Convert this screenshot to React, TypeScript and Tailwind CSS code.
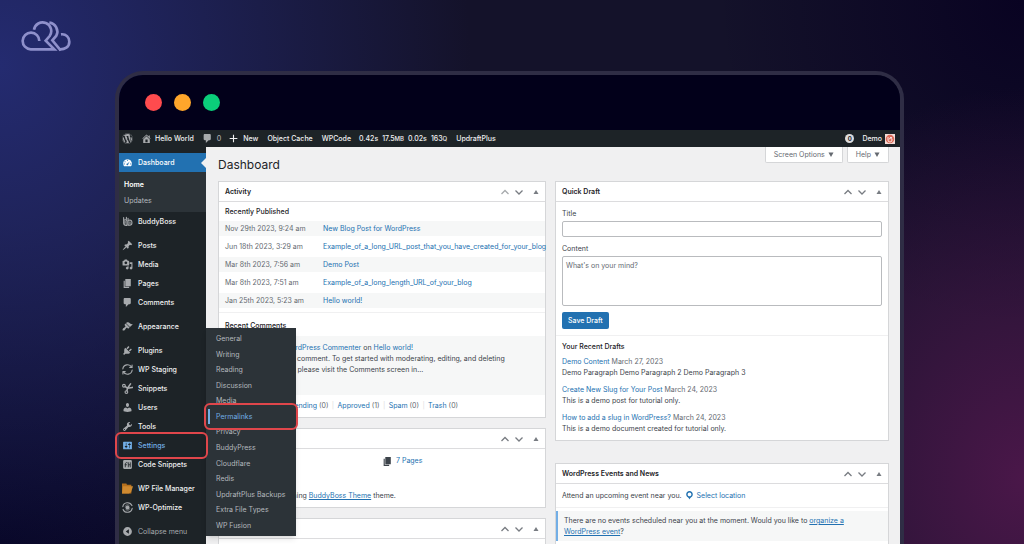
import type { ReactNode } from 'react'
import { FaWordpress } from 'react-icons/fa'

const DASHICONS = {
  dashboard:
    'M3.76 17h12.48A8 8 0 1 0 2 12c0 1.9.66 3.63 1.76 5zM9 6a1 1 0 1 1 2 0 1 1 0 0 1-2 0zM4.5 8.5a1 1 0 1 1 2 0 1 1 0 0 1-2 0zM14 8.4 11.2 13a1.6 1.6 0 1 1-1.1-1zM3 12.5a1 1 0 1 1 2 0 1 1 0 0 1-2 0zM15 12.5a1 1 0 1 1 2 0 1 1 0 0 1-2 0z',
  post: 'M10.44 3.02l1.82-1.82 6.36 6.35-1.83 1.82c-1.05-.68-2.48-.57-3.41.36l-.75.75c-.92.93-1.04 2.35-.35 3.41l-1.83 1.82-2.41-2.41-2.8 2.79c-.42.42-3.38 2.71-3.8 2.29s1.86-3.39 2.28-3.81l2.79-2.79L4.1 9.36l1.83-1.82c1.05.69 2.48.57 3.4-.36l.75-.75c.93-.92 1.05-2.35.36-3.41z',
  media:
    'M13 11V4c0-.55-.45-1-1-1h-1.67L9 1H5L3.67 3H2c-.55 0-1 .45-1 1v7c0 .55.45 1 1 1h10c.55 0 1-.45 1-1zM7 4.5c1.38 0 2.5 1.12 2.5 2.5S8.38 9.5 7 9.5 4.5 8.38 4.5 7 5.62 4.5 7 4.5zM14 6h5v10.5c0 1.38-1.12 2.5-2.5 2.5S14 17.88 14 16.5s1.12-2.5 2.5-2.5c.17 0 .34.02.5.05V9h-3V6zm-4 8.05V13h2v3.5c0 1.38-1.12 2.5-2.5 2.5S7 17.88 7 16.5 8.12 14 9.5 14c.17 0 .34.02.5.05z',
  page: 'M6 15V2h10v13H6zm-1 1h8v2H3V5h2v11z',
  comments:
    'M5 2h9c1.1 0 2 .9 2 2v7c0 1.1-.9 2-2 2h-2l-5 5v-5H5c-1.1 0-2-.9-2-2V4c0-1.1.9-2 2-2z',
  appearance:
    'M14.48 11.06L7.41 3.99l1.5-1.5c.5-.56 2.3-.47 3.51.32 1.21.8 1.43 1.28 2.91 2.1 1.18.64 2.45 1.26 4.45.85zm-.71.71L6.7 4.7 4.93 6.47c-.39.39-.39 1.02 0 1.41l1.06 1.06c.39.39.39 1.03 0 1.42-.6.6-1.43 1.11-2.21 1.69-.35.26-.7.53-1.01.84C1.43 14.23.4 16.08 1.4 17.07c.99 1 2.84-.03 4.18-1.36.31-.31.58-.66.85-1.02.57-.78 1.08-1.61 1.69-2.21.39-.39 1.02-.39 1.41 0l1.06 1.06c.39.39 1.02.39 1.41 0z',
  plugins:
    'M13.11 4.36L9.87 7.6 8 5.73l3.24-3.24c.35-.34 1.05-.2 1.56.32.52.51.66 1.21.31 1.55zm-8 1.77l.91-1.12 9.01 9.01-1.19.84c-.71.71-2.63 1.16-3.82 1.16H6.14L4.9 17.26c-.59.59-1.54.59-2.12 0-.59-.58-.59-1.53 0-2.12l1.24-1.24v-3.88c0-1.13.4-3.19 1.09-3.89zm7.26 3.97l3.24-3.24c.34-.35 1.04-.21 1.55.31.52.51.66 1.21.31 1.55l-3.24 3.25z',
  users:
    'M10 9.25c-2.27 0-2.73-3.44-2.73-3.44C7 4.02 7.82 2 9.97 2c2.16 0 2.98 2.02 2.71 3.81 0 0-.41 3.44-2.68 3.44zm0 2.57L12.72 10c2.39 0 4.52 2.33 4.52 4.53v2.49s-3.65 1.13-7.24 1.13c-3.65 0-7.24-1.13-7.24-1.13v-2.49c0-2.25 1.94-4.48 4.47-4.48z',
  tools:
    'M16.68 9.77c-1.34 1.34-3.3 1.67-4.95.99l-5.41 6.52c-.99.99-2.59.99-3.58 0s-.99-2.59 0-3.57l6.52-5.42c-.68-1.65-.35-3.61.99-4.95 1.28-1.28 3.12-1.62 4.72-1.06l-2.89 2.89 2.82 2.82 2.86-2.87c.53 1.58.18 3.39-1.08 4.65zM3.81 16.21c.4.39 1.04.39 1.43 0 .4-.4.4-1.04 0-1.43-.39-.4-1.03-.4-1.43 0-.39.39-.39 1.03 0 1.43z',
  settings:
    'M18 16V4c0-.55-.45-1-1-1H3c-.55 0-1 .45-1 1v12c0 .55.45 1 1 1h14c.55 0 1-.45 1-1zM8 11h1c.55 0 1 .45 1 1s-.45 1-1 1H8v1.5c0 .28-.22.5-.5.5s-.5-.22-.5-.5V13H6c-.55 0-1-.45-1-1s.45-1 1-1h1V5.5c0-.28.22-.5.5-.5s.5.22.5.5V11zm5-2h-1c-.55 0-1-.45-1-1s.45-1 1-1h1V5.5c0-.28.22-.5.5-.5s.5.22.5.5V7h1c.55 0 1 .45 1 1s-.45 1-1 1h-1v5.5c0 .28-.22.5-.5.5s-.5-.22-.5-.5V9z',
  home: 'M16 8.5l1.53 1.53-1.06 1.06L10 4.6l-6.47 6.49-1.06-1.06L10 2.5l4 4v-2h2v4zm-6-2.46l6 5.99V18H4v-5.97zM12 17v-5H8v5h4z',
  plus: 'M17 9v2h-6v6H9v-6H3V9h6V3h2v6h6z',
  location:
    'M10 2C6.69 2 4 4.69 4 8c0 2.02 1.17 3.71 2.53 4.89.43.37 1.18.96 1.85 1.83.74.97 1.41 2.01 1.62 2.71.21-.7.88-1.74 1.62-2.71.67-.87 1.42-1.46 1.85-1.83C14.83 11.71 16 10.02 16 8c0-3.31-2.69-6-6-6zm0 2.56c1.9 0 3.44 1.54 3.44 3.44S11.9 11.44 10 11.44 6.56 9.9 6.56 8 8.1 4.56 10 4.56z',
  collapse: 'M10 2a8 8 0 1 0 0 16 8 8 0 0 0 0-16zm2.5 12L6.8 10l5.7-4z',
}

function Dashicon({ name }: { name: keyof typeof DASHICONS }) {
  return (
    <svg viewBox="0 0 20 20" className="size-[11px] shrink-0" fill="currentColor" fillRule="evenodd" aria-hidden>
      <path d={DASHICONS[name]} />
    </svg>
  )
}

// Icons that come with the plugins, stroked instead of filled
function PluginIcon({ children }: { children: ReactNode }) {
  return (
    <svg
      viewBox="0 0 20 20"
      className="size-[11px] shrink-0"
      fill="none"
      stroke="currentColor"
      strokeWidth="2"
      strokeLinecap="round"
      strokeLinejoin="round"
      aria-hidden
    >
      {children}
    </svg>
  )
}

const buddyBossIcon = (
  <PluginIcon>
    <path d="M3 3v10a4.500 4.500 0 0 0 4.500 4H9V8.500a3.500 3.500 0 0 0-6 0M8 2.500v3M5.500 9.500v3.500" />
    <path d="M11 4v12.500h3a4 4 0 0 0 4-4V11a4 4 0 0 0-6-3M14.500 10.500v3" />
  </PluginIcon>
)

const stagingIcon = (
  <PluginIcon>
    <path d="M1.500 9a8.600 8.600 0 0 1 16-3.300M18.500 11a8.600 8.600 0 0 1-16 3.300" />
    <path d="M18.300 2v4.200h-4.200M1.700 18v-4.200h4.200" />
  </PluginIcon>
)

const snippetsIcon = (
  <PluginIcon>
    <circle cx="3.500" cy="5" r="2.500" />
    <circle cx="8" cy="16.500" r="2.500" />
    <path d="M6 6.500 10 9.500 19 8M9 14l1-4.500 5.500-8" strokeWidth="2.800" />
  </PluginIcon>
)

const codeSnippetsIcon = (
  <svg viewBox="0 0 20 20" className="size-[11px] shrink-0" aria-hidden>
    <rect x="2" y="2" width="16" height="16" rx="2" fill="currentColor" />
    <path d="M6 15V9a2.500 2.500 0 0 1 4-2M5 10.500h4M11.500 6v9M15 6v9M11.500 10.500H15" stroke="#1d2327" strokeWidth="1.500" fill="none" />
  </svg>
)

const fileManagerIcon = (
  <svg viewBox="0 0 20 20" className="size-[11px] shrink-0" aria-hidden>
    <path d="M0 1h8l1 2h8v16H0z" fill="#b5701d" />
    <path d="M2 6h18l-3 9-4 4H0z" fill="#cf8a30" />
  </svg>
)

const optimizeIcon = (
  <PluginIcon>
    <path d="M1.500 8.500a8.700 8.700 0 0 1 16.500-2M18.500 11.500a8.700 8.700 0 0 1-16.500 2" />
    <circle cx="10" cy="10" r="2.800" fill="currentColor" />
    <path d="M5.500 7.500a5.500 5.500 0 0 1 7.500-2M14.500 12.500a5.500 5.500 0 0 1-7.500 2" strokeWidth="1" />
  </PluginIcon>
)

type MenuItem = { label: string; icon: ReactNode }

// One array per group, groups are separated by a small gap
const MENU: MenuItem[][] = [
  [{ label: 'BuddyBoss', icon: buddyBossIcon }],
  [
    { label: 'Posts', icon: <Dashicon name="post" /> },
    { label: 'Media', icon: <Dashicon name="media" /> },
    { label: 'Pages', icon: <Dashicon name="page" /> },
    { label: 'Comments', icon: <Dashicon name="comments" /> },
  ],
  [{ label: 'Appearance', icon: <Dashicon name="appearance" /> }],
  [
    { label: 'Plugins', icon: <Dashicon name="plugins" /> },
    { label: 'WP Staging', icon: stagingIcon },
    { label: 'Snippets', icon: snippetsIcon },
    { label: 'Users', icon: <Dashicon name="users" /> },
    { label: 'Tools', icon: <Dashicon name="tools" /> },
    { label: 'Settings', icon: <Dashicon name="settings" /> },
    { label: 'Code Snippets', icon: codeSnippetsIcon },
  ],
  [
    { label: 'WP File Manager', icon: fileManagerIcon },
    { label: 'WP-Optimize', icon: optimizeIcon },
  ],
]

const SETTINGS_MENU = [
  'General',
  'Writing',
  'Reading',
  'Discussion',
  'Media',
  'Permalinks',
  'Privacy',
  'BuddyPress',
  'Cloudflare',
  'Redis',
  'UpdraftPlus Backups',
  'Extra File Types',
  'WP Fusion',
]

const POSTS = [
  { date: 'Nov 29th 2023, 9:24 am', title: 'New Blog Post for WordPress' },
  { date: 'Jun 18th 2023, 3:29 am', title: 'Example_of_a_long_URL_post_that_you_have_created_for_your_blog' },
  { date: 'Mar 8th 2023, 7:56 am', title: 'Demo Post' },
  { date: 'Mar 8th 2023, 7:51 am', title: 'Example_of_a_long_length_URL_of_your_blog' },
  { date: 'Jan 25th 2023, 5:23 am', title: 'Hello world!' },
]

const COMMENT_FILTERS = [
  { label: 'All', count: 1 },
  { label: 'Mine', count: 0 },
  { label: 'Pending', count: 0 },
  { label: 'Approved', count: 1 },
  { label: 'Spam', count: 0 },
  { label: 'Trash', count: 0 },
]

const DRAFTS = [
  { title: 'Demo Content', date: 'March 27, 2023', text: 'Demo Paragraph Demo Paragraph 2 Demo Paragraph 3' },
  { title: 'Create New Slug for Your Post', date: 'March 24, 2023', text: 'This is a demo post for tutorial only.' },
  { title: 'How to add a slug in WordPress?', date: 'March 24, 2023', text: 'This is a demo document created for tutorial only.' },
]

function Logo() {
  return (
    <svg viewBox="60 60 156 96" className="h-8 w-[52px]" fill="none" stroke="#8f90cb" strokeWidth="8" aria-label="Logo">
      <path d="M118 123A25 25 0 1 0 92 148H163L137 122 149 108A26 26 0 1 0 102 89" />
      <path d="M148 68A27 27 0 0 1 169 107L157 121 182 151" />
      <path d="M183 103C198 101 208 112 208 125 208 141 194 149 178 148" />
    </svg>
  )
}

function AdminBar() {
  return (
    <header className="flex h-[17px] items-center bg-[#1d2327] pr-[5px] pl-[3px] text-[7px] leading-none font-medium text-[#f0f0f1]">
      <a href="#" aria-label="About WordPress" className="text-[#a7aaad]">
        <FaWordpress className="size-[11px]" />
      </a>
      <a href="#" className="ml-2 flex items-center gap-[3px]">
        <span className="text-[#a7aaad]"><Dashicon name="home" /></span>
        Hello World
      </a>
      <a href="#" className="ml-2 flex items-center gap-1 text-[#a7aaad]">
        <Dashicon name="comments" />0
      </a>
      <a href="#" className="ml-[7px] flex items-center gap-1">
        <Dashicon name="plus" />
        New
      </a>
      <a href="#" className="ml-[9px]">Object Cache</a>
      <a href="#" className="ml-[9px]">WPCode</a>
      <a href="#" className="ml-2 flex items-baseline gap-1">
        <span>0.42s</span>
        <span>17.5<span className="text-[6px]">MB</span></span>
        <span>0.02s</span>
        <span>163<span className="text-[6px]">Q</span></span>
      </a>
      <a href="#" className="ml-[9px]">UpdraftPlus</a>
      <span className="ml-auto flex size-[9px] items-center justify-center rounded-full bg-[#dcdcde] text-[6px] font-bold text-[#1d2327]">
        0
      </span>
      <a href="#" className="ml-2 flex items-center gap-[3px]">
        Demo
        <svg viewBox="0 0 20 20" className="size-[10px]" aria-hidden>
          <rect width="20" height="20" fill="#f3dcd6" />
          <circle cx="10" cy="10" r="8.500" fill="#dd6a58" />
          <path d="M6 6v6a4 4 0 0 0 8 0 3 3 0 0 0-6-1M10 7h4" fill="none" stroke="#fff" strokeWidth="1.600" />
        </svg>
      </a>
    </header>
  )
}

function SettingsFlyout() {
  return (
    <ul className="absolute -top-[108px] left-full z-20 flex h-[208px] w-[90px] flex-col bg-[#2c3338] py-[3px] font-normal text-[#b4b9be] shadow-md">
      {SETTINGS_MENU.map((label) => (
        <li key={label} className="relative flex flex-1 items-center">
          {label === 'Permalinks' ? (
            <>
              <a href="#" className="ml-[2px] flex h-full items-center border-l-2 border-[#72aee6] pl-[6px] text-[#72aee6]">
                {label}
              </a>
              <span className="absolute -inset-x-[2px] -inset-y-[6px] z-10 rounded-md border-2 border-[#e0464b]" />
            </>
          ) : (
            <a href="#" className="pl-[10px]">{label}</a>
          )}
        </li>
      ))}
    </ul>
  )
}

function Sidebar() {
  return (
    <nav className="w-[87px] shrink-0 bg-[#1d2327] pt-[6px] text-[7px] leading-none font-medium text-[#f0f0f1]">
      <a href="#" className="relative flex h-[19px] items-center gap-[5px] bg-[#2271b1] pl-[3px] text-white">
        <Dashicon name="dashboard" />
        Dashboard
        <span className="absolute top-[5px] right-0 border-y-[5px] border-r-[5px] border-y-transparent border-r-[#f0f0f1]" />
      </a>
      <ul className="bg-[#2c3338] py-1">
        <li className="flex h-4 items-center pl-[5px]"><a href="#" className="font-semibold text-white">Home</a></li>
        <li className="flex h-4 items-center pl-[5px]"><a href="#" className="font-normal text-[#b4b9be]">Updates</a></li>
      </ul>
      <div className="flex flex-col gap-[5px]">
        {MENU.map((group) => (
          <ul key={group[0].label}>
            {group.map(({ label, icon }) =>
              label === 'Settings' ? (
                <li key={label} className="relative">
                  <a href="#" className="flex h-[19px] items-center gap-[5px] pl-[3px] text-[#72aee6]">
                    {icon}
                    {label}
                  </a>
                  <SettingsFlyout />
                  <span className="absolute -inset-y-1 -right-[2px] -left-1 z-30 rounded-md border-2 border-[#e0464b]" />
                </li>
              ) : (
                <li key={label}>
                  <a href="#" className="flex h-[19px] items-center gap-[5px] pl-[3px] whitespace-nowrap">
                    <span className="text-[#a7aaad]">{icon}</span>
                    {label}
                  </a>
                </li>
              ),
            )}
          </ul>
        ))}
        <button type="button" className="flex h-[19px] items-center gap-[5px] pl-[3px] font-normal text-[#a7aaad]">
          <Dashicon name="collapse" />
          Collapse menu
        </button>
      </div>
    </nav>
  )
}

function PostBox({ title, firstInColumn = false, children }: { title: string; firstInColumn?: boolean; children?: ReactNode }) {
  return (
    <section className="border border-[#d5d6d8] bg-white">
      <div className="flex h-5 items-center border-b border-[#dcdcde] px-[6px]">
        <h2 className="text-[7px] font-semibold text-[#1d2327]">{title}</h2>
        <div className="ml-auto flex items-center gap-[6px] text-[#787c82]">
          <button type="button" aria-label="Move up" className={firstInColumn ? 'text-[#a7aaad]' : ''}>
            <svg viewBox="0 0 8 8" className="size-2" fill="none" stroke="currentColor" strokeWidth="1.300">
              <path d="M.5 6 4 2.500 7.500 6" />
            </svg>
          </button>
          <button type="button" aria-label="Move down">
            <svg viewBox="0 0 8 8" className="size-2" fill="none" stroke="currentColor" strokeWidth="1.300">
              <path d="M.5 2.500 4 6 7.500 2.500" />
            </svg>
          </button>
          <button type="button" aria-label="Toggle panel" className="ml-1">
            <svg viewBox="0 0 6 8" className="h-2 w-[6px]" fill="currentColor">
              <path d="M3 2 5.500 6h-5z" />
            </svg>
          </button>
        </div>
      </div>
      {children}
    </section>
  )
}

function Activity() {
  return (
    <PostBox title="Activity" firstInColumn>
      <h3 className="flex h-[19px] items-center px-[6px] text-[7px] font-medium text-[#1d2327]">Recently Published</h3>
      <table className="w-full table-fixed border-separate border-spacing-x-0 border-spacing-y-0 text-left">
        <tbody>
          {POSTS.map((post) => (
            <tr key={post.title} className="odd:[&>td]:bg-[#f6f7f7]">
              <td className="h-[18px] w-[98px] border-b-[3px] border-white p-0 pl-[6px] whitespace-nowrap text-[#646970]">{post.date}</td>
              <td className="h-[18px] border-b-[3px] border-white p-0 pl-[6px] whitespace-nowrap">
                <a href="#" className="text-[#2271b1]">{post.title}</a>
              </td>
            </tr>
          ))}
        </tbody>
      </table>
      <h3 className="mt-px flex h-6 items-center border-t border-[#f0f0f1] px-[6px] pt-[2px] text-[7px] font-medium text-[#1d2327]">
        Recent Comments
      </h3>
      <div className="flex h-[59px] gap-[10px] bg-[#f6f7f7] px-[6px] pt-[6px]">
        <span className="size-6 shrink-0 bg-[#dcdcde]" />
        <div className="w-[260px] leading-[11px]">
          <p>
            From <a href="#" className="text-[#2271b1]">A WordPress Commenter</a> on{' '}
            <a href="#" className="text-[#2271b1]">Hello world!</a>
          </p>
          <p>
            Hi, this is a comment. To get started with moderating, editing, and deleting
            comments, please visit the Comments screen in…
          </p>
        </div>
      </div>
      <ul className="flex h-[22px] items-center px-[7px] text-[#646970]">
        {COMMENT_FILTERS.map(({ label, count }, i) => (
          <li key={label} className="flex">
            {i > 0 && <span className="w-[9px] text-center text-[#dcdcde]">|</span>}
            <a href="#" className="text-[#2271b1]">{label}</a>&nbsp;({count})
          </li>
        ))}
      </ul>
    </PostBox>
  )
}

function AtAGlance() {
  return (
    <PostBox title="At a Glance">
      <ul className="grid grid-cols-2 px-[6px] pt-[6px]">
        <li className="flex h-3 items-center gap-[3px]">
          <Dashicon name="post" />
          <a href="#" className="text-[#2271b1]">5 Posts</a>
        </li>
        <li className="flex h-3 items-center gap-[3px]">
          <Dashicon name="page" />
          <a href="#" className="text-[#2271b1]">7 Pages</a>
        </li>
      </ul>
      <p className="px-[6px] pt-6 pb-[6px]">
        WordPress 6.4.2 running <a href="#" className="text-[#2271b1] underline">BuddyBoss Theme</a> theme.
      </p>
    </PostBox>
  )
}

function QuickDraft() {
  return (
    <PostBox title="Quick Draft">
      <form className="flex flex-col items-start px-[6px] pt-[7px]">
        <label htmlFor="draft-title" className="leading-[10px]">Title</label>
        <input
          id="draft-title"
          type="text"
          className="mt-[2px] h-4 w-full rounded-xs border border-[#b9bbbe] bg-white px-1"
        />
        <label htmlFor="draft-content" className="mt-[7px] leading-[10px]">Content</label>
        <textarea
          id="draft-content"
          placeholder="What's on your mind?"
          className="mt-[2px] h-[50px] w-full resize-none rounded-xs border border-[#b9bbbe] bg-white px-[3px] py-1 placeholder:text-[#646970]"
        />
        <button type="button" className="mt-[6px] h-[17px] rounded-xs bg-[#2271b1] px-[6px] font-medium text-white">
          Save Draft
        </button>
      </form>
      <div className="mt-[6px] border-t border-[#f0f0f1] p-[6px]">
        <h3 className="text-[7px] leading-[10px] font-medium text-[#1d2327]">Your Recent Drafts</h3>
        <ul className="mt-1 flex flex-col gap-[6px] leading-[11px]">
          {DRAFTS.map((draft) => (
            <li key={draft.title}>
              <a href="#" className="text-[#2271b1]">{draft.title}</a>{' '}
              <time className="text-[#646970]">{draft.date}</time>
              <p>{draft.text}</p>
            </li>
          ))}
        </ul>
      </div>
    </PostBox>
  )
}

function EventsAndNews() {
  return (
    <PostBox title="WordPress Events and News">
      <div className="flex h-6 items-center border-b border-[#f0f0f1] px-[6px]">
        Attend an upcoming event near you.
        <button type="button" className="ml-[2px] flex items-center gap-[2px] text-[#2271b1]">
          <Dashicon name="location" />
          Select location
        </button>
      </div>
      <p className="mt-[3px] border-l-2 border-[#72aee6] bg-[#f6f7f7] py-1 pr-10 pl-[6px] leading-[11px]">
        There are no events scheduled near you at the moment. Would you like to{' '}
        <a href="#" className="text-[#2271b1] underline">organize a WordPress event</a>?
      </p>
      <div className="h-10" />
    </PostBox>
  )
}

function ScreenTab({ children }: { children: ReactNode }) {
  return (
    <button
      type="button"
      className="flex h-4 items-center gap-[3px] rounded-b-xs border border-t-0 border-[#d5d6d8] bg-white px-2 text-[#646970]"
    >
      {children}
      <svg viewBox="0 0 6 6" className="size-[6px]" fill="currentColor" aria-hidden>
        <path d="M.5.500h5L3 5z" />
      </svg>
    </button>
  )
}

export default function App() {
  return (
    <div className="flex h-screen flex-col overflow-hidden bg-[#14122a] bg-[radial-gradient(ellipse_46%_100%_at_0%_12%,#242b70_0%,transparent_100%),radial-gradient(ellipse_32%_72%_at_100%_88%,#4a1749_0%,transparent_100%),radial-gradient(ellipse_30%_60%_at_100%_0%,#090322_0%,transparent_100%),radial-gradient(ellipse_50%_60%_at_0%_100%,#050320_0%,transparent_100%)] font-[Inter,'Liberation_Sans',sans-serif]">
      <div className="px-5 pt-5">
        <Logo />
      </div>
      <div className="mr-[120px] ml-[115px] flex min-h-0 flex-1 flex-col pt-[19px]">
        <div className="flex flex-1 flex-col rounded-t-[28px] border-4 border-b-0 border-[#2f2d45]">
          <div className="flex h-[55px] shrink-0 items-center gap-3 rounded-t-3xl bg-[#02001a] pl-[26px]">
            <span className="size-[17px] rounded-full bg-[#ff4b4e]" />
            <span className="size-[17px] rounded-full bg-[#ffa62b]" />
            <span className="size-[17px] rounded-full bg-[#0bce7a]" />
          </div>
          <AdminBar />
          <div className="flex flex-1">
            <Sidebar />
            <main className="min-w-0 flex-1 bg-[#f0f0f1] pr-[11px] pl-3 text-[7px] leading-[10px] text-[#3c434a]">
              <div className="flex h-[34px] items-start justify-between">
                <h1 className="pt-[10px] text-[12px] leading-4 text-[#1d2327]">Dashboard</h1>
                <div className="flex gap-1">
                  <ScreenTab>Screen Options</ScreenTab>
                  <ScreenTab>Help</ScreenTab>
                </div>
              </div>
              <div className="grid grid-cols-[328fr_334fr] items-start gap-[9px]">
                <div className="flex min-w-0 flex-col gap-[10px]">
                  <Activity />
                  <AtAGlance />
                  <PostBox title="Site Health Status">
                    <div className="h-10" />
                  </PostBox>
                </div>
                {/* relative keeps this column above long links that run out of the first one */}
                <div className="relative flex min-w-0 flex-col gap-[22px]">
                  <QuickDraft />
                  <EventsAndNews />
                </div>
              </div>
            </main>
          </div>
        </div>
      </div>
    </div>
  )
}
